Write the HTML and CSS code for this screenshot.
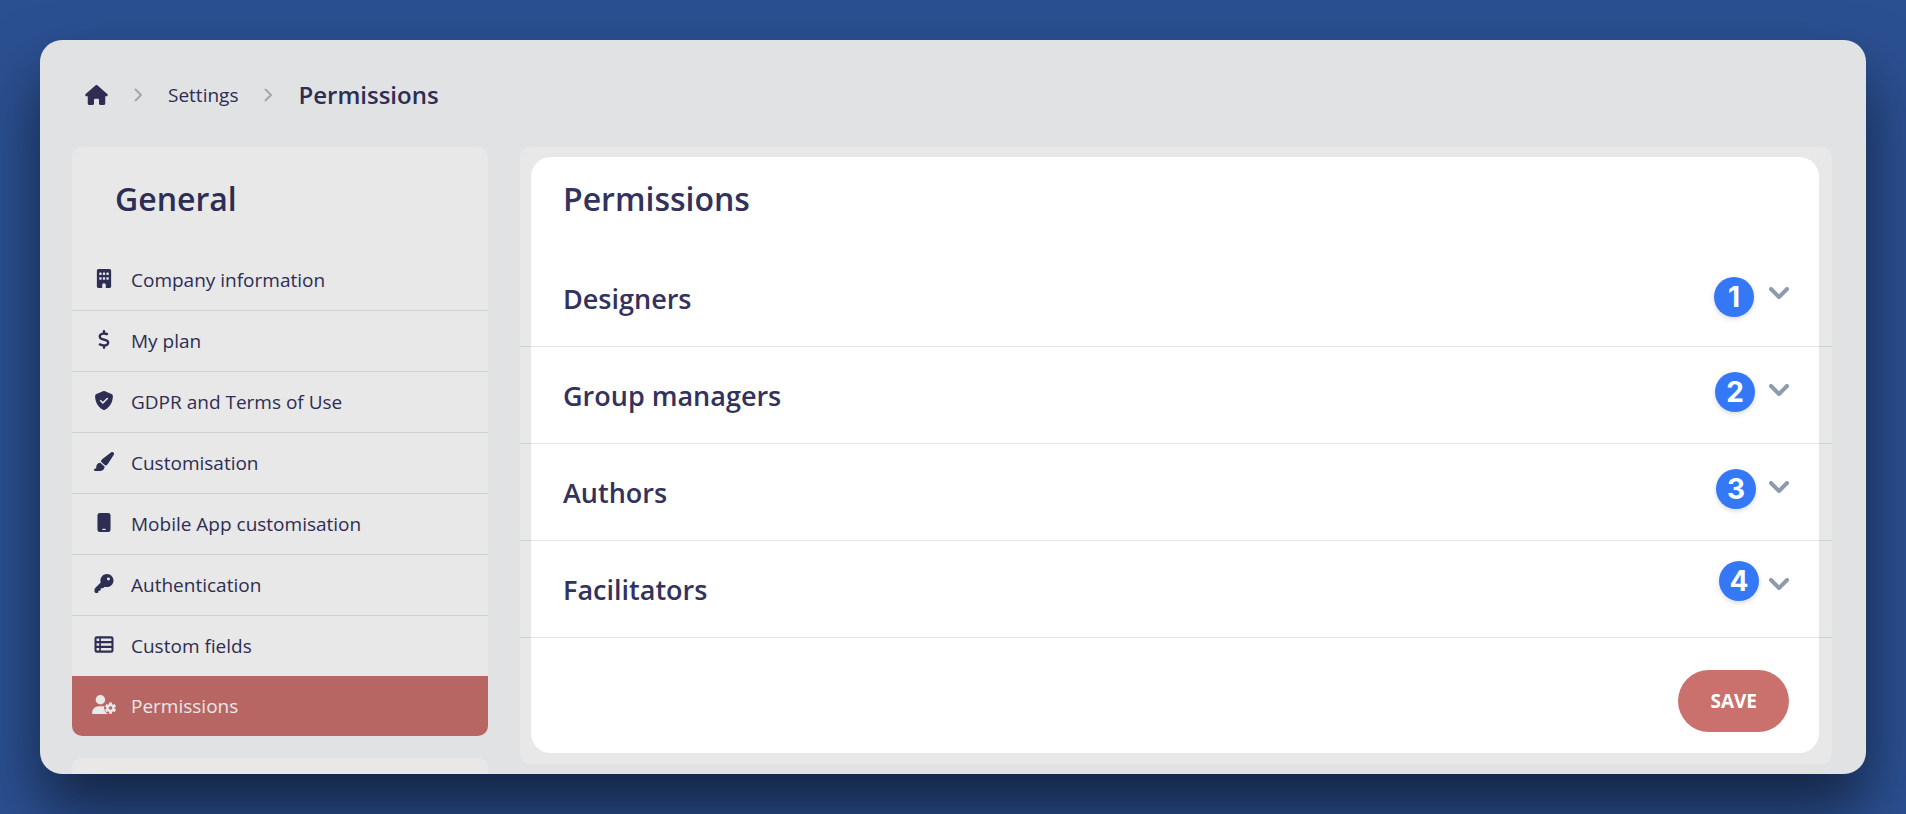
FILE: index.html
```html
<!doctype html>
<html lang="en">

<head>
  <meta charset="utf-8">
  <meta name="viewport" content="width=device-width, initial-scale=1">
  <title>Permissions</title>
  <link rel="stylesheet" href="styles.css">
</head>

<body>
  <div class="window">
    <nav class="breadcrumb" aria-label="Breadcrumb">
      <a href="#" aria-label="Home">
        <svg class="home" viewBox="0 0 576 512"><path d="M575.8 255.5c0 18-15 32.1-32 32.1h-32l.7 160.2c0 2.7-.2 5.4-.5 8.1V472c0 22.1-17.9 40-40 40H392c-22.1 0-40-17.9-40-40V384c0-17.700-14.300-32-32-32H256c-17.700 0-32 14.300-32 32v88c0 22.100-17.900 40-40 40H104c-22.100 0-40-17.900-40-40V287.600H32c-18 0-32-14-32-32.100c0-9 3-17 10-24L266.400 8c7-7 15-8 22-8s15 2 21 7L564.800 231.500c8 7 12 15 11 24z"/></svg>
      </a>
      <svg class="separator" viewBox="0 0 8 14"><path d="M1 1l6 6-6 6"/></svg>
      <a href="#">Settings</a>
      <svg class="separator" viewBox="0 0 8 14"><path d="M1 1l6 6-6 6"/></svg>
      <span class="current">Permissions</span>
    </nav>

    <div class="content">
      <aside class="sidebar">
        <div class="card">
          <h2 class="title">General</h2>
          <ul class="menu">
            <li><a href="#">
              <svg class="icon" viewBox="0 0 384 512"><path fill-rule="evenodd" d="M48 0C21.500 0 0 21.500 0 48V464c0 26.500 21.500 48 48 48h96V432c0-26.500 21.500-48 48-48s48 21.500 48 48v80h96c26.500 0 48-21.500 48-48V48c0-26.500-21.500-48-48-48H48zM80 96h32q16 0 16 16v32q0 16-16 16H80q-16 0-16-16v-32q0-16 16-16zM176 96h32q16 0 16 16v32q0 16-16 16h-32q-16 0-16-16v-32q0-16 16-16zM272 96h32q16 0 16 16v32q0 16-16 16h-32q-16 0-16-16v-32q0-16 16-16zM80 224h32q16 0 16 16v32q0 16-16 16H80q-16 0-16-16v-32q0-16 16-16zM176 224h32q16 0 16 16v32q0 16-16 16h-32q-16 0-16-16v-32q0-16 16-16zM272 224h32q16 0 16 16v32q0 16-16 16h-32q-16 0-16-16v-32q0-16 16-16z"/></svg>
              Company information</a></li>
            <li><a href="#">
              <svg class="icon" viewBox="0 0 320 512"><path d="M160 0c17.700 0 32 14.300 32 32V67.700c1.600 .2 3.100 .4 4.700 .7c.4 .1 .7 .1 1.100 .2l48 8.800c17.400 3.200 28.900 19.900 25.700 37.200s-19.900 28.900-37.200 25.700l-47.500-8.700c-31.300-4.600-58.900-1.500-78.300 6.200s-27.200 18.300-29 28.100c-2 10.700-.5 16.700 1.200 20.400c1.800 3.900 5.500 8.300 12.800 13.200c16.300 10.700 41.300 17.700 73.700 26.300l2.900 .8c28.600 7.600 63.600 16.800 89.600 33.800c14.200 9.300 27.600 21.900 35.900 39.500c8.500 17.900 10.300 37.900 6.400 59.200c-6.900 38-33.100 63.400-65.600 76.700c-13.700 5.600-28.600 9.200-44.400 11V480c0 17.700-14.300 32-32 32s-32-14.300-32-32V445.100c-.4-.1-.9-.1-1.300-.2l-.2 0 0 0c-24.400-3.800-64.500-14.300-91.500-26.300c-16.100-7.200-23.400-26.100-16.200-42.200s26.100-23.400 42.200-16.200c20.900 9.300 55.300 18.500 75.200 21.600c31.900 4.700 58.200 2 76-5.300c16.900-6.900 24.600-16.900 26.800-28.900c1.900-10.600 .4-16.700-1.300-20.400c-1.900-4-5.600-8.400-13-13.300c-16.400-10.700-41.500-17.700-74-26.300l-2.800-.7 0 0C119.400 279.300 84.400 270 58.400 253c-14.200-9.300-27.500-22-35.800-39.600c-8.400-17.900-10.100-37.900-6.100-59.200C23.700 116 52.300 91.200 84.800 78.300c13.300-5.300 27.900-8.900 43.200-11V32c0-17.700 14.300-32 32-32z"/></svg>
              My plan</a></li>
            <li><a href="#">
              <svg class="icon" viewBox="0 0 512 512"><path d="M256 0c5 0 9 1 13 3L457 83c22 9 38 31 38 57-.5 99-41 280-213 363a57 57 0 0 1-52 0C57 420 17 239 17 140c-.1-26 16-48 38-57L243 3c4-2 8-3 13-3z"/><path class="cut" d="M166 262l60 60 120-120"/></svg>
              GDPR and Terms of Use</a></li>
            <li><a href="#">
              <svg class="icon" viewBox="16 0 576 512"><path d="M339.300 367.100c27.300-3.900 51.900-19.400 67.200-42.900L568.200 74.100c12.600-19.500 9.400-45.300-7.600-61.200S517.700-4.400 499.100 9.600L262.400 187.200c-24 18-38.200 46.100-38.400 76.100L339.300 367.100zm-19.600 25.400l-116-104.400C143.900 290.300 96 339.600 96 400c0 3.900 .2 7.800 .6 11.600C98.400 429.100 86.400 448 68.800 448H64c-17.700 0-32 14.300-32 32s14.300 32 32 32H208c61.900 0 112-50.100 112-112c0-2.500-.1-5-.2-7.500z"/></svg>
              Customisation</a></li>
            <li><a href="#">
              <svg class="icon" viewBox="0 0 384 512"><rect x="16" width="352" height="512" rx="64"/><rect class="cut-fill" x="144" y="424" width="96" height="32" rx="16"/></svg>
              Mobile App customisation</a></li>
            <li><a href="#">
              <svg class="icon" viewBox="0 0 512 512"><path d="M336 352c97.200 0 176-78.800 176-176S433.200 0 336 0S160 78.800 160 176c0 18.700 2.900 36.800 8.300 53.700L20 378C7 391 0 404 0 422v50q0 40 40 40h30q34 0 34-32v-32h32q32 0 32-32v-32h32c20 0 30-5 41-15l41.300-25.300c16.900 5.400 35 8.300 53.700 8.300zM376 96a40 40 0 1 1 0 80 40 40 0 1 1 0-80z"/></svg>
              Authentication</a></li>
            <li><a href="#">
              <svg class="icon" viewBox="0 0 512 512"><path fill-rule="evenodd" d="M64 32h384q64 0 64 64v320q0 64-64 64H64q-64 0-64-64V96q0-64 64-64zM56 92v68h72V92zM172 92v68h284V92zM56 220v72h72v-72zM172 220v72h284v-72zM56 352v68h72v-68zM172 352v68h284v-68z"/></svg>
              Custom fields</a></li>
            <li><a class="active" href="#">
              <svg class="icon" viewBox="0 0 640 512"><circle cx="224" cy="128" r="128"/><path d="M178 304C80 304 0 383 0 482c0 17 13 30 30 30h395V320c-30-10-60-16-112-16z"/><circle class="hole" cx="496" cy="352" r="172"/><g class="teeth"><path d="M496 202v300M366 277l260 150M366 427l260-150"/></g><circle cx="496" cy="352" r="112"/><circle class="hole" cx="496" cy="352" r="48"/></svg>
              Permissions</a></li>
          </ul>
        </div>
        <div class="card next"></div>
      </aside>

      <main class="panel">
        <h1 class="title">Permissions</h1>
        <button type="button" class="section">Designers
          <svg class="chevron" viewBox="0 0 20 12"><path d="M2 2l8 8 8-8"/></svg>
        </button>
        <button type="button" class="section">Group managers
          <svg class="chevron" viewBox="0 0 20 12"><path d="M2 2l8 8 8-8"/></svg>
        </button>
        <button type="button" class="section">Authors
          <svg class="chevron" viewBox="0 0 20 12"><path d="M2 2l8 8 8-8"/></svg>
        </button>
        <button type="button" class="section">Facilitators
          <svg class="chevron" viewBox="0 0 20 12"><path d="M2 2l8 8 8-8"/></svg>
        </button>
        <div class="actions">
          <button type="button" class="save">SAVE</button>
        </div>

        <div class="spotlight"></div>
        <span class="pin pin-1">1</span>
        <span class="pin pin-2">2</span>
        <span class="pin pin-3">3</span>
        <span class="pin pin-4">4</span>
      </main>
    </div>
  </div>
</body>

</html>
```

FILE: styles.css
```css
* {
  box-sizing: border-box;
}

body {
  margin: 0;
  padding: 40px;
  height: 100vh;
  overflow: hidden;
  background: #2b5092;
  color: #33325c;
  font: 19px/28px "Open Sans", sans-serif;
}

a {
  color: inherit;
  text-decoration: none;
}

button {
  border: none;
  font-family: inherit;
  cursor: pointer;
}

svg {
  display: block;
  flex: none;
  fill: currentColor;
}

.window {
  height: 100%;
  overflow: hidden;
  border-radius: 22px;
  background: #f8f9fb;
  box-shadow: 0 36px 64px rgba(0, 0, 0, 0.55);
}

/* Breadcrumb */
.breadcrumb {
  display: flex;
  align-items: center;
  gap: 26px;
  padding: 39px 45px 36px;
  line-height: 32px;
}

.breadcrumb .home {
  width: 23px;
  height: 20px;
}

.separator {
  width: 8px;
  height: 14px;
  fill: none;
  stroke: #b4b8c4;
  stroke-width: 2;
}

.current {
  font-size: 24px;
  font-weight: 600;
}

/* Columns */
.content {
  display: flex;
  align-items: flex-start;
  gap: 32px;
  padding: 0 34px 0 32px;
}

.sidebar {
  flex: none;
  width: 416px;
}

.card {
  overflow: hidden;
  border-radius: 10px;
  background: #fff;
}

.next {
  height: 200px;
  margin-top: 22px;
}

.title {
  margin: 0;
  padding: 32px 43px 31px;
  font-size: 32px;
  font-weight: 600;
  line-height: 40px;
}

/* Side menu */
.menu {
  margin: 0;
  padding: 0;
  list-style: none;
}

.menu a {
  display: flex;
  align-items: center;
  gap: 15px;
  height: 61px;
  padding: 0 20px;
  border-bottom: 1px solid #e0e8eb;
}

.menu .active {
  height: 60px;
  margin-top: -1px;
  border: none;
  background: #ca716d;
  color: #fff;
}

.icon {
  width: 24px;
  height: 19px;
  margin-bottom: 3px;
}

.cut {
  fill: none;
  stroke: #fff;
  stroke-width: 44;
  stroke-linecap: round;
}

.cut-fill {
  fill: #fff;
}

.teeth {
  stroke: currentColor;
  stroke-width: 80;
}

.hole {
  fill: #ca716d;
}

/* Permissions panel */
.panel {
  position: relative;
  flex: 1;
  border-radius: 10px;
  background: #fff;
}

.section {
  display: flex;
  align-items: center;
  justify-content: space-between;
  width: 100%;
  height: 97px;
  padding: 0 43px;
  border-bottom: 1px solid #e0e8eb;
  background: none;
  color: inherit;
  font-size: 27px;
  font-weight: 600;
}

.chevron {
  width: 20px;
  height: 12px;
  margin-bottom: 10px;
  fill: none;
  stroke: #8d9bad;
  stroke-width: 4;
  stroke-linecap: round;
  stroke-linejoin: round;
}

.actions {
  display: flex;
  justify-content: flex-end;
  padding: 32px 43px;
}

.save {
  height: 62px;
  padding: 0 32px;
  border-radius: 31px;
  background: #ca716d;
  color: #fff;
  font-size: 19px;
  font-weight: 700;
}

/* Dims everything in the window but the panel content */
.spotlight {
  position: absolute;
  inset: 10px 13px 11px 11px;
  border-radius: 20px;
  box-shadow: 0 0 0 2000px rgba(0, 0, 0, 0.09);
  pointer-events: none;
}

/* Numbered pins over the sections */
.pin {
  position: absolute;
  width: 40px;
  height: 40px;
  border-radius: 50%;
  background: #3478f6;
  box-shadow: 0 2px 5px rgba(0, 0, 0, 0.15);
  color: #fff;
  font: 700 28px/40px Inter, sans-serif;
  text-align: center;
}

.pin-1 {
  top: 130px;
  right: 78px;
}

.pin-2 {
  top: 225px;
  right: 77px;
}

.pin-3 {
  top: 322px;
  right: 76px;
}

.pin-4 {
  top: 414px;
  right: 73px;
}
```
